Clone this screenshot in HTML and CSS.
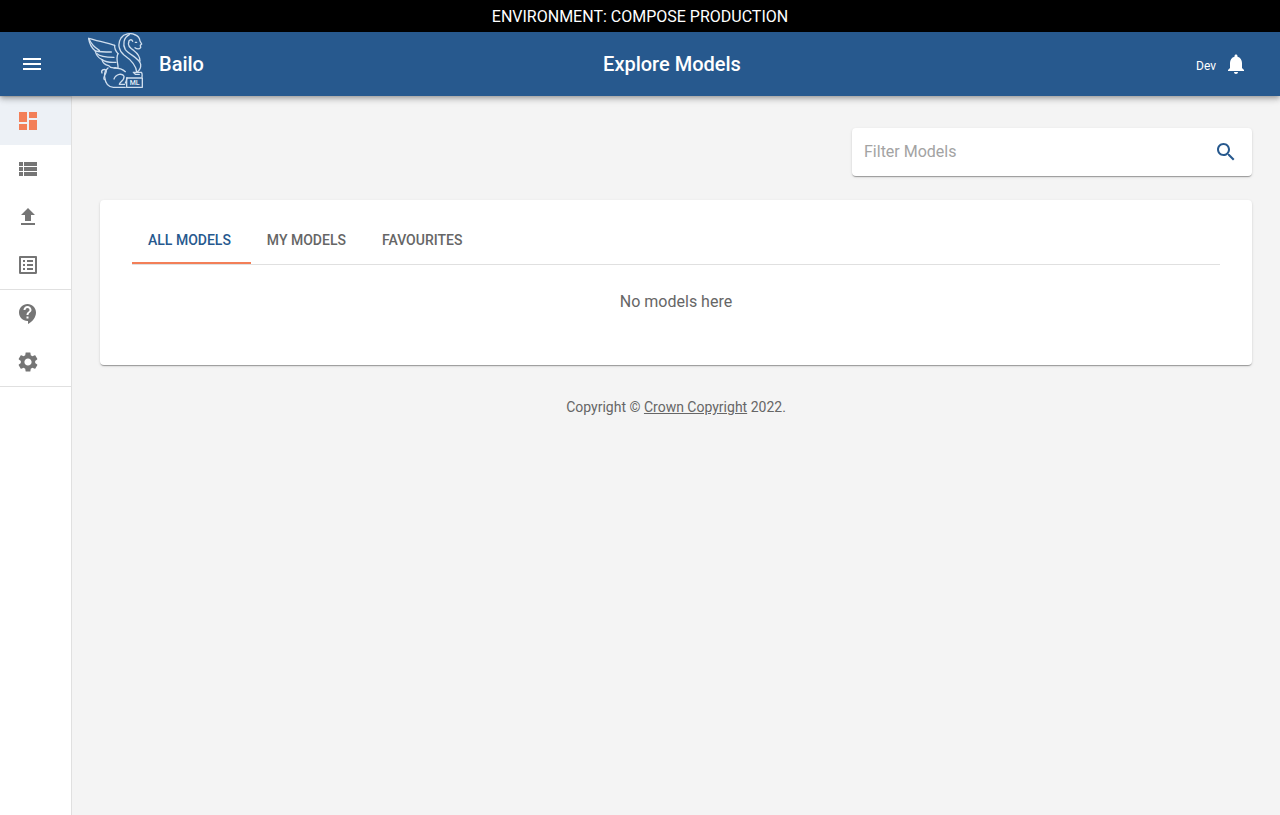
FILE: index.html
```html
<!DOCTYPE html>
<html lang="en">
<head>
<meta charset="utf-8">
<meta name="viewport" content="width=device-width, initial-scale=1">
<title>Explore Models - Bailo</title>
<link rel="stylesheet" href="styles.css">
</head>
<body class="page">
<div class="banner">ENVIRONMENT: COMPOSE PRODUCTION</div>

<header class="topbar">
  <div class="menu-slot">
    <button class="icon-button" type="button" aria-label="Open menu">
      <svg class="icon" viewBox="0 0 24 24"><path d="M3 18h18v-2H3v2zm0-5h18v-2H3v2zm0-7v2h18V6H3z"/></svg>
    </button>
  </div>
  <div class="topbar-main">
    <a class="brand" href="#">
      <svg class="logo" viewBox="0 0 165 165" aria-hidden="true">
        <g class="logo-lines">
          <path d="M80 37C60 30 30 24 2 16C4 32 10 44 22 54C24 66 30 74 42 80C44 90 52 96 62 98C66 104 72 106 84 104"/>
          <path d="M22 54C38 57 54 57 70 57M27 62C36 72 56 73 78 73M42 80C54 88 70 89 84 88M2 16C8 30 16 42 34 52"/>
          <path d="M80 37C79 46 83 54 90 62"/>
          <path d="M140 5C128-1 108 2 99 15C88 32 92 53 108 66C128 80 144 94 146 117"/>
          <path d="M124 5C107 14 103 34 112 50C126 67 153 74 158 94C159 104 154 112 148 117"/>
          <path d="M122 28C118 38 127 46 138 53C149 61 156 70 156 84"/>
          <path d="M140 5C149 8 155 16 156 24L161 33L157 37L158 44C154 49 147 49 141 44M122 28C122 20 131 17 134 25M142 28L146 28"/>
          <path d="M90 62C82 78 92 96 90 105M78 105C92 105 104 108 112 116M60 105C52 112 48 120 50 132C52 150 58 162 76 163H112"/>
          <path d="M50 140C40 134 60 118 54 112C48 106 38 112 42 120M78 138C84 122 104 120 108 130C110 142 94 148 94 154H110"/>
          <path d="M136 118H160C163 121 163 125 162 132M136 118L142 124H154M112 150C116 144 116 136 117 134"/>
          <path d="M116 135H163V163H116Z"/>
        </g>
        <text class="logo-text" x="140" y="157" text-anchor="middle">ML</text>
      </svg>
      <span class="brand-name">Bailo</span>
    </a>
    <h1 class="title">Explore Models</h1>
    <div class="user">
      <span class="user-name">Dev</span>
      <button class="icon-button" type="button" aria-label="Notifications">
        <svg class="icon" viewBox="0 0 24 24"><path d="M12 22c1.1 0 2-.9 2-2h-4c0 1.1.89 2 2 2zm6-6v-5c0-3.070-1.640-5.640-4.500-6.320V4c0-.83-.67-1.500-1.500-1.500s-1.500.67-1.500 1.500v.68C7.630 5.360 6 7.920 6 11v5l-2 2v1h16v-1l-2-2z"/></svg>
      </button>
    </div>
  </div>
</header>

<div class="body">
  <nav class="sidebar" aria-label="Main">
    <div class="nav-group">
      <a class="nav-item nav-item-active" href="#" aria-label="Models" aria-current="page">
        <svg class="icon" viewBox="0 0 24 24"><path d="M3 13h8V3H3v10zm0 8h8v-6H3v6zm10 0h8V11h-8v10zm0-18v6h8V3h-8z"/></svg>
      </a>
      <a class="nav-item" href="#" aria-label="Deployments">
        <svg class="icon" viewBox="0 0 24 24"><path d="M3 14h4v-4H3v4zm0 5h4v-4H3v4zM3 9h4V5H3v4zm5 5h13v-4H8v4zm0 5h13v-4H8v4zM8 5v4h13V5H8z"/></svg>
      </a>
      <a class="nav-item" href="#" aria-label="Upload">
        <svg class="icon" viewBox="0 0 24 24"><path d="M5 20h14v-2H5v2zm0-10h4v6h6v-6h4l-7-7-7 7z"/></svg>
      </a>
      <a class="nav-item" href="#" aria-label="Reviews">
        <svg class="icon" viewBox="0 0 24 24"><path d="M19 5v14H5V5h14m1.100-2H3.900c-.5 0-.9.4-.9.9v16.200c0 .4.4.9.9.9h16.200c.4 0 .9-.5.9-.9V3.900c0-.5-.5-.9-.9-.9zM11 7h6v2h-6V7zm0 4h6v2h-6v-2zm0 4h6v2h-6zM7 7h2v2H7zm0 4h2v2H7zm0 4h2v2H7z"/></svg>
      </a>
    </div>
    <div class="nav-group">
      <a class="nav-item" href="#" aria-label="Support">
        <svg class="icon" viewBox="0 0 24 24"><path d="M11.500 2C6.810 2 3 5.810 3 10.500S6.810 19 11.500 19h.5v3c4.860-2.340 8-7 8-11.500C20 5.810 16.190 2 11.500 2zm1 14.500h-2v-2h2v2zm0-3.500h-2c0-3.250 3-3 3-5 0-1.100-.9-2-2-2s-2 .9-2 2h-2c0-2.210 1.790-4 4-4s4 1.790 4 4c0 2.500-3 2.750-3 5z"/></svg>
      </a>
      <a class="nav-item" href="#" aria-label="Settings">
        <svg class="icon" viewBox="0 0 24 24"><path d="M19.140 12.940c.04-.3.06-.61.06-.94 0-.32-.02-.64-.07-.94l2.030-1.580c.18-.14.23-.41.12-.61l-1.920-3.320c-.12-.22-.37-.29-.59-.22l-2.390.96c-.5-.38-1.030-.7-1.620-.94l-.36-2.540c-.04-.24-.24-.41-.48-.41h-3.840c-.24 0-.43.17-.47.41l-.36 2.540c-.59.24-1.130.57-1.620.94l-2.390-.96c-.22-.08-.47 0-.59.22L2.740 8.870c-.12.21-.08.47.12.61l2.030 1.580c-.05.3-.09.63-.09.94s.02.64.07.94l-2.030 1.580c-.18.14-.23.41-.12.61l1.920 3.320c.12.22.37.29.59.22l2.390-.96c.5.38 1.030.7 1.620.94l.36 2.540c.05.24.24.41.48.41h3.840c.24 0 .44-.17.47-.41l.36-2.540c.59-.24 1.130-.56 1.620-.94l2.390.96c.22.08.47 0 .59-.22l1.920-3.320c.12-.22.07-.47-.12-.61l-2.010-1.580zM12 15.600c-1.980 0-3.600-1.620-3.600-3.600s1.620-3.600 3.600-3.600 3.600 1.620 3.600 3.600-1.620 3.600-3.600 3.600z"/></svg>
      </a>
    </div>
  </nav>

  <main class="content">
    <form class="search" role="search">
      <input class="search-input" type="text" placeholder="Filter Models" aria-label="Filter Models">
      <button class="icon-button search-button" type="button" aria-label="Filter">
        <svg class="icon" viewBox="0 0 24 24"><path d="M15.500 14h-.79l-.28-.27C15.410 12.590 16 11.110 16 9.500 16 5.910 13.090 3 9.500 3S3 5.910 3 9.500 5.910 16 9.500 16c1.610 0 3.090-.59 4.230-1.570l.27.28v.79l5 4.990L20.490 19l-4.990-5zm-6 0C7.010 14 5 11.990 5 9.500S7.010 5 9.500 5 14 7.010 14 9.500 11.990 14 9.500 14z"/></svg>
      </button>
    </form>

    <section class="card">
      <div class="tabs" role="tablist">
        <button class="tab tab-active" type="button" role="tab" aria-selected="true">ALL MODELS</button>
        <button class="tab" type="button" role="tab" aria-selected="false">MY MODELS</button>
        <button class="tab" type="button" role="tab" aria-selected="false">FAVOURITES</button>
      </div>
      <p class="empty">No models here</p>
    </section>

    <footer class="footer">Copyright © <a class="footer-link" href="#">Crown Copyright</a> 2022.</footer>
  </main>
</div>
</body>
</html>
```
FILE: styles.css
```css
* {
  box-sizing: border-box;
}

.page {
  display: flex;
  flex-direction: column;
  min-height: 100vh;
  margin: 0;
  background: #f4f4f4;
  color: #666;
  font-family: Roboto, "Liberation Sans", sans-serif;
  font-size: 16px;
  line-height: 24px;
}

.icon {
  display: block;
  width: 24px;
  height: 24px;
  fill: currentColor;
}

.icon-button {
  padding: 8px;
  border: 0;
  background: none;
  color: inherit;
  cursor: pointer;
}

.banner {
  padding: 5px 4px 3px;
  background: #000;
  color: #fff;
  text-align: center;
}

.topbar {
  position: relative;
  z-index: 1;
  display: flex;
  height: 64px;
  padding-right: 24px;
  background: #27598e;
  color: #fff;
  box-shadow: 0 2px 4px -1px rgba(0, 0, 0, 0.2), 0 4px 5px rgba(0, 0, 0, 0.14), 0 1px 10px rgba(0, 0, 0, 0.12);
}

.menu-slot {
  display: flex;
  align-items: center;
  width: 88px;
  padding-left: 12px;
}

.topbar-main {
  display: grid;
  flex: 1;
  grid-template-columns: 1fr auto 1fr;
  align-items: center;
}

.brand {
  display: flex;
  align-items: center;
  gap: 16px;
  height: 64px;
  color: inherit;
  text-decoration: none;
}

.logo {
  width: 55px;
  height: 55px;
  margin-bottom: 7px;
}

.logo-lines {
  fill: none;
  stroke: #cfdeee;
  stroke-width: 4;
  stroke-linecap: round;
  stroke-linejoin: round;
}

.logo-text {
  fill: #e4edf6;
  font-family: Roboto, sans-serif;
  font-size: 21px;
  font-weight: 500;
}

.brand-name,
.title {
  margin: 0;
  font-size: 20px;
  font-weight: 500;
  line-height: 32px;
}

.user {
  display: flex;
  align-items: center;
  justify-content: flex-end;
}

.user-name {
  padding-top: 4px;
  font-size: 12px;
  line-height: 20px;
}

.body {
  display: flex;
  flex: 1;
}

.sidebar {
  width: 72px;
  border-right: 1px solid #e0e0e0;
  border-top: 1px solid #e0e0e0;
  background: #fff;
}

.nav-group {
  border-bottom: 1px solid #e0e0e0;
}

.nav-item {
  display: block;
  padding: 12px 16px;
  color: #757575;
}

.nav-item-active {
  background: #edf1f6;
  color: #f37f58;
}

.content {
  flex: 1;
  padding: 32px 28px;
}

.search {
  display: flex;
  align-items: center;
  width: 400px;
  max-width: 100%;
  height: 48px;
  margin: 0 0 24px auto;
  padding: 0 6px 0 12px;
}

.search,
.card {
  border-radius: 4px;
  background: #fff;
  box-shadow: 0 2px 1px -1px rgba(0, 0, 0, 0.2), 0 1px 1px rgba(0, 0, 0, 0.14), 0 1px 3px rgba(0, 0, 0, 0.12);
}

.search-input {
  flex: 1;
  min-width: 0;
  padding: 0;
  border: 0;
  outline: 0;
  color: #222;
  font: inherit;
}

.search-input::placeholder {
  color: #a3a3a3;
}

.search-button {
  color: #27598e;
}

.card {
  padding: 16px 32px 51px;
}

.tabs {
  display: flex;
  border-bottom: 1px solid #e0e0e0;
}

.tab {
  height: 48px;
  padding: 2px 20px 0 16px;
  border: 0;
  border-bottom: 2px solid transparent;
  background: none;
  color: #666;
  font: 500 14px/20px Roboto, "Liberation Sans", sans-serif;
  cursor: pointer;
}

.tab-active {
  border-bottom-color: #f37f58;
  color: #27598e;
}

.empty {
  margin: 25px 0 0;
  text-align: center;
}

.footer {
  margin-top: 32px;
  font-size: 14px;
  line-height: 20px;
  text-align: center;
}

.footer-link {
  color: inherit;
}
```
